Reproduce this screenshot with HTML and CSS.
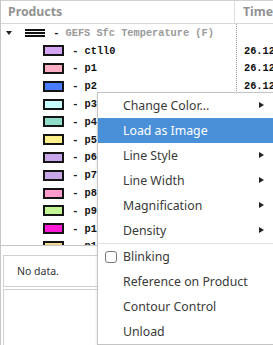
FILE: index.html
```html
<!DOCTYPE html>
<html lang="en">
<head>
    <meta charset="UTF-8">
    <title>Products</title>
    <link rel="stylesheet" href="styles.css">
</head>
<body>
    <div class="window">
        <div class="tree-pane">
            <div class="tree-header">
                <div class="col-products">Products</div>
                <div class="col-time">Time</div>
            </div>
            <div class="tree-body">
                <div class="col-products">
                    <div class="row group">
                        <span class="expander"></span>
                        <svg class="lines" width="20" height="8" viewBox="0 0 20 8">
                            <rect x="0" y="0" width="20" height="2" fill="#111"/>
                            <rect x="0" y="3" width="20" height="2" fill="#111"/>
                            <rect x="0" y="6" width="20" height="2" fill="#111"/>
                        </svg>
                        <span class="label">&nbsp;-&nbsp;<span class="group-name">GEFS Sfc Temperature (F)</span></span>
                    </div>
                    <div class="row item"><span class="swatch" style="background:#d2a6f2"></span><span class="label">&nbsp;-&nbsp;ctll0</span></div>
                    <div class="row item"><span class="swatch" style="background:#ffafc3"></span><span class="label">&nbsp;-&nbsp;p1</span></div>
                    <div class="row item"><span class="swatch" style="background:#4a7cff"></span><span class="label">&nbsp;-&nbsp;p2</span></div>
                    <div class="row item"><span class="swatch" style="background:#c6fcfc"></span><span class="label">&nbsp;-&nbsp;p3</span></div>
                    <div class="row item"><span class="swatch" style="background:#8fdcc8"></span><span class="label">&nbsp;-&nbsp;p4</span></div>
                    <div class="row item"><span class="swatch" style="background:#fff08c"></span><span class="label">&nbsp;-&nbsp;p5</span></div>
                    <div class="row item"><span class="swatch" style="background:#c8a6ea"></span><span class="label">&nbsp;-&nbsp;p6</span></div>
                    <div class="row item"><span class="swatch" style="background:#c8a6ea"></span><span class="label">&nbsp;-&nbsp;p7</span></div>
                    <div class="row item"><span class="swatch" style="background:#ff9ccc"></span><span class="label">&nbsp;-&nbsp;p8</span></div>
                    <div class="row item"><span class="swatch" style="background:#c4f494"></span><span class="label">&nbsp;-&nbsp;p9</span></div>
                    <div class="row item"><span class="swatch" style="background:#ff1ad6"></span><span class="label">&nbsp;-&nbsp;p10</span></div>
                    <div class="row item"><span class="swatch" style="background:#f0d890"></span><span class="label">&nbsp;-&nbsp;p11</span></div>
                </div>
                <div class="col-time">
                    <div class="row"></div>
                    <div class="row">26.12Z</div>
                    <div class="row">26.12Z</div>
                    <div class="row">26.12Z</div>
                    <div class="row">26.12Z</div>
                    <div class="row">26.12Z</div>
                    <div class="row">26.12Z</div>
                    <div class="row">26.12Z</div>
                    <div class="row">26.12Z</div>
                    <div class="row">26.12Z</div>
                    <div class="row">26.12Z</div>
                    <div class="row">26.12Z</div>
                    <div class="row">26.12Z</div>
                </div>
            </div>
        </div>

        <div class="frame status">No data.</div>
        <div class="frame empty"></div>

        <div class="context-menu">
            <div class="menu-item">Change Color...<span class="submenu-arrow"></span></div>
            <div class="menu-item active">Load as Image</div>
            <div class="menu-item">Line Style<span class="submenu-arrow"></span></div>
            <div class="menu-item">Line Width<span class="submenu-arrow"></span></div>
            <div class="menu-item">Magnification<span class="submenu-arrow"></span></div>
            <div class="menu-item">Density<span class="submenu-arrow"></span></div>
            <div class="menu-separator"></div>
            <div class="menu-item check"><span class="checkbox"></span>Blinking</div>
            <div class="menu-item">Reference on Product</div>
            <div class="menu-item">Contour Control</div>
            <div class="menu-item">Unload</div>
        </div>
    </div>
</body>
</html>
```

FILE: styles.css
```css
body {
    margin: 0;
    font-family: 'Noto Sans', sans-serif;
    background-color: #ffffff;
}

.window {
    position: relative;
    width: 273px;
    height: 345px;
    overflow: hidden;
    box-sizing: border-box;
    border-left: 1px solid #c6c6c6;
}

.tree-pane {
    height: 246px;
    box-sizing: border-box;
    border-top: 1px solid #d0d0d0;
    border-bottom: 1px solid #c6c6c6;
    overflow: hidden;
}

.tree-header {
    display: flex;
    height: 23px;
    box-sizing: border-box;
    border-bottom: 1px solid #d6d6d6;
    font-size: 12.3px;
    font-weight: bold;
    color: #929292;
    line-height: 22px;
}

.tree-header .col-products {
    width: 235px;
    padding-left: 7px;
    box-sizing: border-box;
    border-right: 1px solid #dedede;
}

.tree-header .col-time {
    padding-left: 8px;
}

.tree-body {
    display: flex;
    font-family: 'Liberation Mono', monospace;
    font-size: 10.3px;
    font-weight: bold;
    color: #111;
}

.tree-body .col-products {
    width: 235px;
    flex-shrink: 0;
}

.tree-body .col-time {
    border-left: 1px dotted #9a9a9a;
    padding-left: 7px;
    white-space: nowrap;
}

.row {
    display: flex;
    align-items: center;
    height: 17.8px;
    white-space: nowrap;
}

.expander {
    width: 0;
    height: 0;
    margin-left: 5px;
    border-left: 3.5px solid transparent;
    border-right: 3.5px solid transparent;
    border-top: 4px solid #222;
}

.lines {
    margin-left: 13px;
    margin-right: 2px;
}

.group-name {
    color: #9a9a9a;
}

.swatch {
    width: 21px;
    height: 11px;
    margin-left: 42px;
    margin-right: 2px;
    box-sizing: border-box;
    border: 2px solid #141414;
}

.frame {
    margin-left: 2px;
    border: 1px solid #d0d0d0;
    border-right: none;
}

.status {
    margin-top: 9px;
    height: 32px;
    box-sizing: border-box;
    padding-left: 13px;
    font-size: 10.5px;
    color: #333;
    line-height: 30px;
}

.empty {
    margin-top: 2px;
    height: 80px;
}

.context-menu {
    position: absolute;
    left: 96px;
    top: 92px;
    width: 190px;
    background-color: #ffffff;
    border: 1px solid #c4c4c4;
    box-shadow: 0 1px 3px rgba(0, 0, 0, 0.12);
    font-size: 12.3px;
    color: #3a3a3a;
}

.menu-item {
    display: flex;
    align-items: center;
    height: 25px;
    padding-left: 25px;
    padding-right: 24px;
    position: relative;
}

.menu-item.active {
    background-color: #4a90d9;
    color: #ffffff;
}

.submenu-arrow {
    position: absolute;
    left: 161px;
    top: 9px;
    width: 0;
    height: 0;
    border-top: 3px solid transparent;
    border-bottom: 3px solid transparent;
    border-left: 5px solid #222;
}

.menu-separator {
    height: 1px;
    background-color: #e2e2e2;
}

.menu-item.check {
    padding-left: 7px;
}

.checkbox {
    width: 12px;
    height: 12px;
    margin-right: 6px;
    box-sizing: border-box;
    border: 1px solid #7a7a7a;
    border-radius: 3px;
}
```
